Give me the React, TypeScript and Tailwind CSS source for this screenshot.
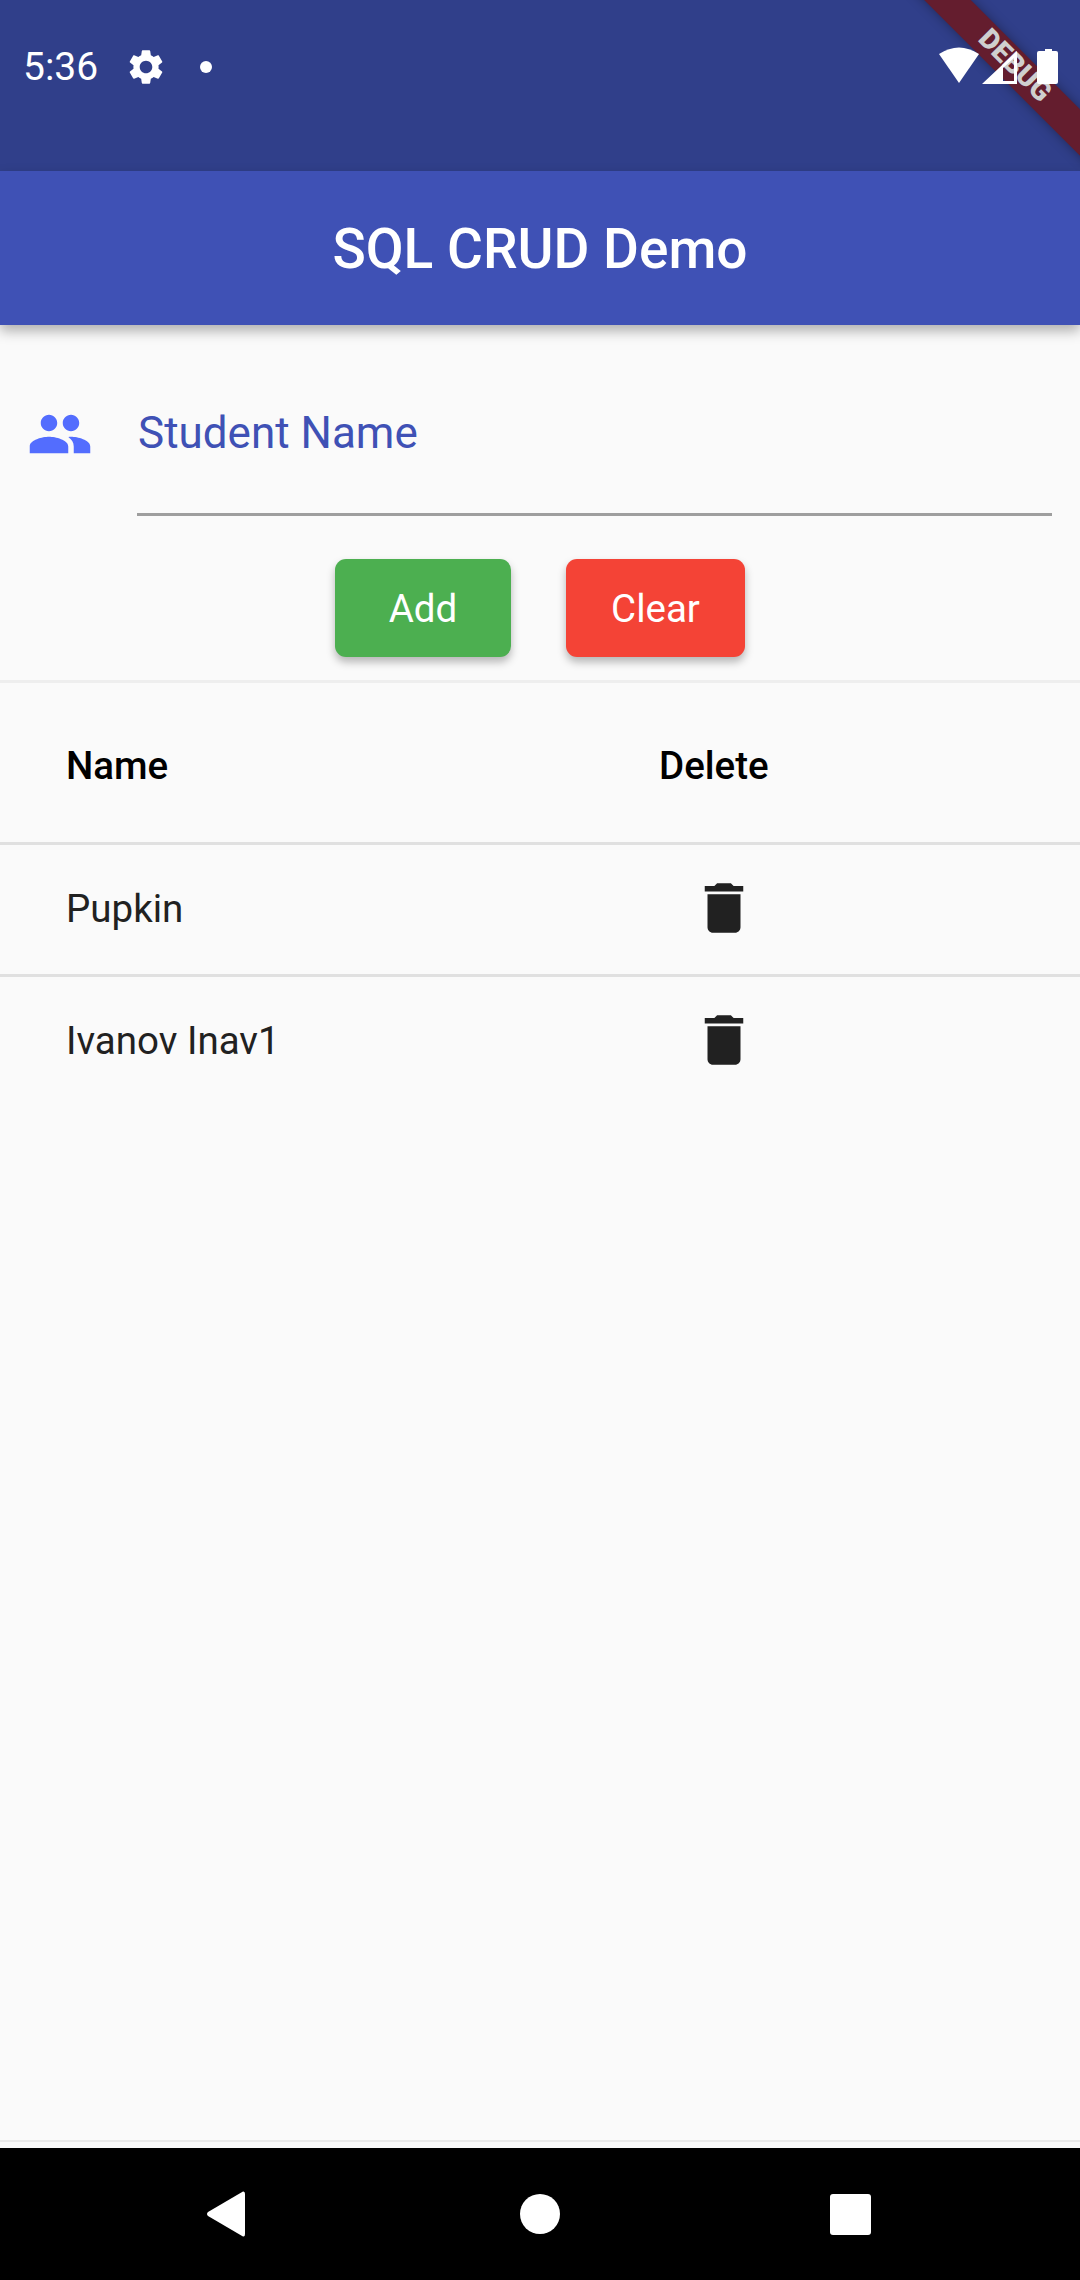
const trash = "M6 19c0 1.1.9 2 2 2h8c1.1 0 2-.9 2-2V7H6v12zM19 4h-3.5l-1-1h-5l-1 1H5v2h14V4z";
const people = "M16 11c1.66 0 2.99-1.34 2.99-3S17.66 5 16 5c-1.66 0-3 1.34-3 3s1.34 3 3 3zm-8 0c1.66 0 2.99-1.34 2.99-3S9.66 5 8 5C6.34 5 5 6.34 5 8s1.34 3 3 3zm0 2c-2.33 0-7 1.17-7 3.5V19h14v-2.5c0-2.33-4.67-3.5-7-3.5zm8 0c-.29 0-.62.02-.97.05 1.16.84 1.97 1.97 1.97 3.45V19h6v-2.5c0-2.33-4.67-3.5-7-3.5z";
const gear = "M19.14 12.94c.04-.3.06-.61.06-.94 0-.32-.02-.64-.07-.94l2.03-1.58c.18-.14.23-.41.12-.61l-1.92-3.32c-.12-.22-.37-.29-.59-.22l-2.39.96c-.5-.38-1.03-.7-1.62-.94l-.36-2.54c-.04-.24-.24-.41-.48-.41h-3.84c-.24 0-.43.17-.47.41l-.36 2.54c-.59.24-1.13.57-1.62.94l-2.39-.96c-.22-.08-.47 0-.59.22L2.74 8.87c-.12.21-.08.47.12.61l2.03 1.58c-.05.3-.09.63-.09.94s.02.64.07.94l-2.03 1.58c-.18.14-.23.41-.12.61l1.92 3.32c.12.22.37.29.59.22l2.39-.96c.5.38 1.03.7 1.62.94l.36 2.54c.05.24.24.41.48.41h3.84c.24 0 .44-.17.47-.41l.36-2.54c.59-.24 1.13-.56 1.62-.94l2.39.96c.22.08.47 0 .59-.22l1.92-3.32c.12-.22.07-.47-.12-.61l-2.01-1.58zM12 15.6c-1.98 0-3.6-1.62-3.6-3.6s1.62-3.6 3.6-3.6 3.6 1.62 3.6 3.6-1.62 3.6-3.6 3.6z";

function Row({ name }: { name: string }) {
  return (
    <div className="flex items-center h-[132px] pb-[2px] border-t-[3px] border-[#e0e0e0] box-border">
      <div className="w-[691px] pl-[66px] text-[38.5px] text-[#212121]">{name}</div>
      <svg viewBox="0 0 24 24" className="w-[66px] h-[66px] relative top-[-1px]" fill="#212121">
        <path d={trash} />
      </svg>
    </div>
  );
}

export default function App() {
  return (
    <div className="relative w-[1080px] h-[2280px] flex flex-col overflow-hidden bg-[#fafafa] font-['Roboto',sans-serif]">
      {/* status bar */}
      <div className="h-[171px] shrink-0 bg-[#303f8a] relative">
        {/* debug banner */}
        <div className="absolute right-0 top-0 w-[220px] h-[171px] overflow-hidden">
          <div className="absolute left-[4px] top-[50px] w-[300px] h-[33px] rotate-45 bg-[#641d2e] shadow-[0_0_12px_rgba(0,0,0,0.35)] flex items-center justify-center text-[28px] leading-none font-bold text-[#cfcfcf] font-['Roboto',sans-serif]">
            <span className="relative top-[-2px] font-black">DEBUG</span>
          </div>
        </div>
        <div className="relative flex items-center h-[42px] translate-y-[46px] pl-[23px] text-white">
          <span className="text-[39px] leading-none w-[102px]">5:36</span>
          <svg viewBox="0 0 24 24" className="w-[42px] h-[42px]" fill="#fff"><path d={gear} /></svg>
          <span className="ml-[33px] w-[12px] h-[12px] rounded-full bg-white" />
          <div className="flex-1" />
          <svg width="122" height="42" viewBox="0 0 122 42" fill="#fff" className="mr-[20px]">
            <path d="M1 9 Q21-4 41 9 L21 38 Z" transform="translate(0,-1)" />
            <path fillRule="evenodd" d="M44 38 L79 5 L79 38 Z M76 35 L76 12 L65 22 L65 35 Z" />
            <path d="M107 5 L107 3 L114 3 L114 5 L118 5 Q120 5 120 7 L120 36 Q120 38 118 38 L101 38 Q99 38 99 36 L99 7 Q99 5 101 5 Z" />
          </svg>
        </div>
      </div>
      {/* app bar */}
      <div className="relative h-[154px] shrink-0 bg-[#3f51b5] flex items-center justify-center text-white text-[55px] font-medium shadow-[0_6px_12px_rgba(0,0,0,0.3)]">
        <span className="relative top-[1px]">SQL CRUD Demo</span>
      </div>
      {/* form */}
      <div className="flex pt-[76px] pl-[27px] pr-[28px]">
        <svg viewBox="0 0 24 24" className="w-[66px] h-[66px] shrink-0" fill="#536dfe"><path d={people} /></svg>
        <div className="ml-[44px] flex-1 h-[115px] border-b-[3px] border-[#9e9e9e] pl-[1px] text-[44px] leading-[64px] text-[#3f51b5]">
          Student Name
        </div>
      </div>
      <div className="flex pl-[335px] gap-[55px] mt-[43px]">
        <button className="w-[176px] h-[98px] pt-[1px] rounded-[11px] bg-[#4caf50] text-white text-[38.5px] shadow-[0_5px_8px_rgba(0,0,0,0.28)]">Add</button>
        <button className="w-[179px] h-[98px] pt-[1px] rounded-[11px] bg-[#f44336] text-white text-[38.5px] shadow-[0_5px_8px_rgba(0,0,0,0.28)]">Clear</button>
      </div>
      {/* table */}
      <div className="mt-[23px] border-t-[3px] border-[#eeeeee]">
        <div className="flex items-center h-[159px] pt-[6px] text-[38.5px] font-medium text-black">
          <div className="w-[659px] pl-[66px]">Name</div>
          <div>Delete</div>
        </div>
        <Row name="Pupkin" />
        <Row name="Ivanov Inav1" />
      </div>
      <div className="flex-1" />
      <div className="h-[2px] bg-[#eaeaea] mb-[6px]" />
      {/* nav bar */}
      <div className="h-[132px] shrink-0 bg-black flex items-center pl-[207px]">
        <svg width="38" height="46" viewBox="0 0 38 46" fill="#fff">
          <path d="M36 .5 Q38 0 38 3 L38 43 Q38 46 36 45.5 L1 25 Q-1 23 1 21 Z" />
        </svg>
        <span className="ml-[275px] w-[40px] h-[40px] rounded-full bg-white" />
        <span className="ml-[270px] w-[41px] h-[41px] rounded-[3px] bg-white" />
      </div>
    </div>
  );
}
